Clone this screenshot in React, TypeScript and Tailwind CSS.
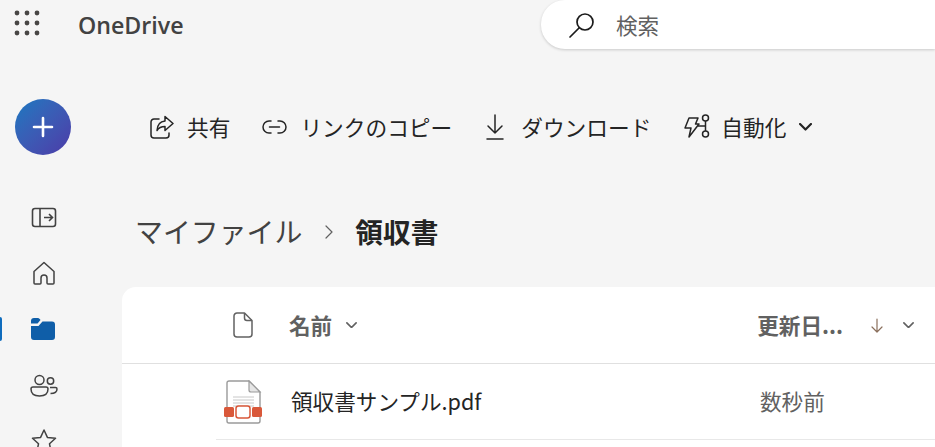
const jp = "font-['Noto_Sans_CJK_JP','Noto_Sans',sans-serif]";

function Waffle() {
  const dots = [4, 14, 24];
  return (
    <svg width="28" height="28" viewBox="0 0 28 28" fill="#484644">
      {dots.map((y) => dots.map((x) => <circle key={`${x}-${y}`} cx={x} cy={y} r="2.4" />))}
    </svg>
  );
}

function Chevron({ width, stroke, strokeWidth, className }: { width: number; stroke: string; strokeWidth: number; className: string }) {
  return (
    <svg className={className} width={width} height={width * 0.6} viewBox="0 0 10 6" fill="none" stroke={stroke} strokeWidth={strokeWidth} strokeLinecap="round" strokeLinejoin="round">
      <path d="M.8.8 5 5 9.200.8" />
    </svg>
  );
}

function ToolbarItem({ icon, label, gap, ml }: { icon: React.ReactNode; label: string; gap: string; ml: string }) {
  return (
    <div className={`flex items-center ${gap} ${ml}`}>
      {icon}
      <span className="text-[21.7px] leading-none text-[#242424] whitespace-nowrap">{label}</span>
    </div>
  );
}

export default function App() {
  return (
    <div className={`h-[447px] w-[935px] overflow-hidden bg-[#f5f5f5] ${jp}`}>
      {/* header */}
      <header className="flex h-[49px] items-start">
        <div className="ml-[13px] mt-[9px]"><Waffle /></div>
        <span className="ml-[37px] mt-[9px] w-[106px] whitespace-nowrap font-['Open_Sans',sans-serif] text-[23.2px] font-semibold leading-[32px] text-[#424242]">OneDrive</span>
        <div className="ml-[357px] flex h-[49px] flex-1 items-center rounded-bl-[24px] rounded-tl-[24px] bg-white shadow-[0_1px_3px_rgba(0,0,0,0.18)]">
          <svg className="ml-[27px]" width="28" height="28" viewBox="0 0 28 28" fill="none" stroke="#1b1b1b" strokeWidth="1.7">
            <circle cx="17" cy="11" r="8" />
            <path d="M11 17 2 26" strokeLinecap="round" />
          </svg>
          <span className="ml-[20px] text-[21.6px] leading-none text-[#616161]">検索</span>
        </div>
      </header>

      <div className="flex">
        {/* sidebar */}
        <aside className="relative flex w-[122px] shrink-0 flex-col pl-[15px] pt-[50px]">
          <div className="flex h-[56px] w-[56px] items-center justify-center rounded-full bg-gradient-to-br from-[#0f78c0] to-[#4a3aa8]">
            <svg width="22" height="22" viewBox="0 0 22 22" stroke="#fff" strokeWidth="2.6" strokeLinecap="round">
              <path d="M11 2v18M2 11h18" />
            </svg>
          </div>
          <div className="ml-[16px] mt-[51px] flex flex-col gap-[32px]">
            <svg width="26" height="24" viewBox="0 0 26 24" fill="none" stroke="#424242" strokeWidth="1.6">
              <rect x="1.500" y="2.500" width="23" height="18" rx="2.500" />
              <path d="M9 2.500v18M13 11.500h8M18 8l3.500 3.500L18 15" />
            </svg>
            <svg className="-mt-[1px]" width="26" height="26" viewBox="0 0 26 26" fill="none" stroke="#424242" strokeWidth="1.5">
              <path d="M3 10.500 13 1.500l10 9V22a1 1 0 0 1-1 1h-5a1 1 0 0 1-1-1v-5a3 3 0 0 0-6 0v5a1 1 0 0 1-1 1H4a1 1 0 0 1-1-1Z" strokeLinejoin="round" />
            </svg>
            <svg className="-ml-px -mt-[2px]" width="26" height="24" viewBox="0 0 26 24" fill="#0f5ea8">
              <path d="M1 4a3 3 0 0 1 3-3h3.500c1 0 2 .5 3 2l-3 3.500H1Z" />
              <path d="M1 9h7.500l4-4.500H22a3 3 0 0 1 3 3V20a3 3 0 0 1-3 3H4a3 3 0 0 1-3-3Z" />
            </svg>
            <svg className="-ml-px mt-[1px]" width="28" height="24" viewBox="0 0 28 24" fill="none" stroke="#424242" strokeWidth="1.5">
              <circle cx="9.500" cy="6" r="4.500" />
              <path d="M1 15a2 2 0 0 1 2-2h13a2 2 0 0 1 2 2c0 5-4 7-8.500 7S1 20 1 15Z" />
              <circle cx="20.500" cy="7" r="3.200" />
              <path d="M20 13.500h5.500a1.500 1.500 0 0 1 1.500 1.500c0 3-2.500 4.500-6.500 4.500" />
            </svg>
            <svg className="-mt-[2px]" width="26" height="26" viewBox="0 0 26 26" fill="none" stroke="#424242" strokeWidth="1.5">
              <path d="M13 2l3.400 7.400 8.100.9-6 5.500 1.600 8L13 20l-7.100 3.800 1.600-8-6-5.500 8.100-.9Z" strokeLinejoin="round" />
            </svg>
          </div>
          <div className="absolute left-0 top-[268px] h-[24px] w-[2px] rounded-r bg-[#0f6cbd]" />
        </aside>

        <main className="min-w-0 flex-1">
          {/* toolbar */}
          <div className="mt-[50px] flex h-[56px] items-center pl-[28px]">
            <ToolbarItem
              gap="gap-[13px]"
              ml="ml-0"
              label="共有"
              icon={
                <svg width="24" height="24" viewBox="0 0 24 24" fill="none" stroke="#242424" strokeWidth="1.5" strokeLinejoin="round" strokeLinecap="round">
                  <path d="M9 4H4a3 3 0 0 0-3 3v13a3 3 0 0 0 3 3h12a3 3 0 0 0 3-3v-2" />
                  <path d="M15 1.500 23 8.500l-8 7v-4c-4 0-6.500 1.500-8 4 .3-5 3-9 8-9.500Z" />
                </svg>
              }
            />
            <ToolbarItem
              gap="gap-[13px]"
              ml="ml-[32px]"
              label="リンクのコピー"
              icon={
                <svg width="25" height="14" viewBox="0 0 25 14" fill="none" stroke="#242424" strokeWidth="1.5" strokeLinecap="round">
                  <path d="M9 1H7a6 6 0 0 0 0 12h2M16 1h2a6 6 0 0 1 0 12h-2M7.500 7h10" />
                </svg>
              }
            />
            <ToolbarItem
              gap="gap-[17px]"
              ml="ml-[34px]"
              label="ダウンロード"
              icon={
                <svg width="18" height="26" viewBox="0 0 18 26" fill="none" stroke="#242424" strokeWidth="1.5" strokeLinecap="round" strokeLinejoin="round">
                  <path d="M9 1v18M2 12l7 7 7-7M1 25h16" />
                </svg>
              }
            />
            <ToolbarItem
              gap="gap-[11px]"
              ml="ml-[33px]"
              label="自動化"
              icon={
                <svg width="26" height="26" viewBox="0 0 26 26" fill="none" stroke="#242424" strokeWidth="1.5" strokeLinejoin="round">
                  <path d="M5 4h9l-2.500 6H15L5 23l2-9H1Z" />
                  <circle cx="21.500" cy="4" r="3" />
                  <circle cx="21.500" cy="20" r="3" />
                  <path d="M21.500 7v10M14 12h7.500" />
                </svg>
              }
            />
            <Chevron className="ml-[13px]" width={13} stroke="#242424" strokeWidth={1.7} />
          </div>

          {/* breadcrumb */}
          <div className="mt-[60px] flex h-[34px] items-center pl-[13px]">
            <span className="text-[27.9px] leading-none text-[#424242]">マイファイル</span>
            <svg className="ml-[23px]" width="8" height="14" viewBox="0 0 8 14" fill="none" stroke="#616161" strokeWidth="1.2" strokeLinecap="round" strokeLinejoin="round">
              <path d="M1 1l6 6-6 6" />
            </svg>
            <span className="ml-[22px] text-[27.7px] font-semibold leading-none text-[#242424]">領収書</span>
          </div>

          {/* file list */}
          <div className="mt-[38px] h-[160px] rounded-tl-[14px] bg-white">
            <div className="flex h-[77px] items-center border-b border-[#e0e0e0]">
              <svg className="ml-[111px]" width="20" height="26" viewBox="0 0 20 26" fill="none" stroke="#616161" strokeWidth="1.5" strokeLinejoin="round">
                <path d="M4 1h7.500L19 8.500V22a3 3 0 0 1-3 3H4a3 3 0 0 1-3-3V4a3 3 0 0 1 3-3Z" />
                <path d="M11.500 1v5A2.500 2.500 0 0 0 14 8.500h5" />
              </svg>
              <span className="ml-[36px] text-[21.600px] font-bold leading-none text-[#616161]">名前</span>
              <Chevron className="ml-[14px]" width={11} stroke="#616161" strokeWidth={1.5} />
              <span className="ml-[400px] whitespace-nowrap text-[21.600px] font-bold leading-none text-[#616161]">更新日...</span>
              <svg className="ml-[28px]" width="12" height="15" viewBox="0 0 12 15" fill="none" stroke="#8a6f5c" strokeWidth="1.2" strokeLinecap="round" strokeLinejoin="round">
                <path d="M6 1v13M1 9l5 5 5-5" />
              </svg>
              <Chevron className="ml-[20px]" width={11} stroke="#616161" strokeWidth={1.5} />
            </div>
            <div className="ml-[94px] flex h-[76px] items-center border-b border-[#e8e8e8]">
              <svg className="ml-[8px]" width="40" height="44" viewBox="0 0 40 44" fill="none">
                <path d="M3 3a2 2 0 0 1 2-2h20l11 11v29a2 2 0 0 1-2 2H5a2 2 0 0 1-2-2Z" fill="#fff" stroke="#9a9a9a" strokeWidth="1.4" />
                <path d="M25 1v9a2 2 0 0 0 2 2h9Z" fill="#e6e6e6" stroke="#9a9a9a" strokeWidth="1.2" />
                <path d="M9 17h21M9 20h21M9 23h21M9 26h21" stroke="#c8c8c8" strokeWidth="1" />
                <rect x="0" y="27" width="10" height="10" rx="1.500" fill="#d9583a" />
                <rect x="28" y="27" width="10" height="10" rx="1.500" fill="#d9583a" />
                <rect x="12" y="26" width="14" height="12" rx="2.500" fill="#fff" stroke="#d9583a" strokeWidth="1.500" />
              </svg>
              <span className="ml-[27px] -translate-y-px w-[469px] whitespace-nowrap text-[21.600px] leading-none text-[#242424]">領収書サンプル.pdf</span>
              <span className="-translate-y-px whitespace-nowrap text-[21.600px] leading-none text-[#616161]">数秒前</span>
            </div>
          </div>
        </main>
      </div>
    </div>
  );
}
